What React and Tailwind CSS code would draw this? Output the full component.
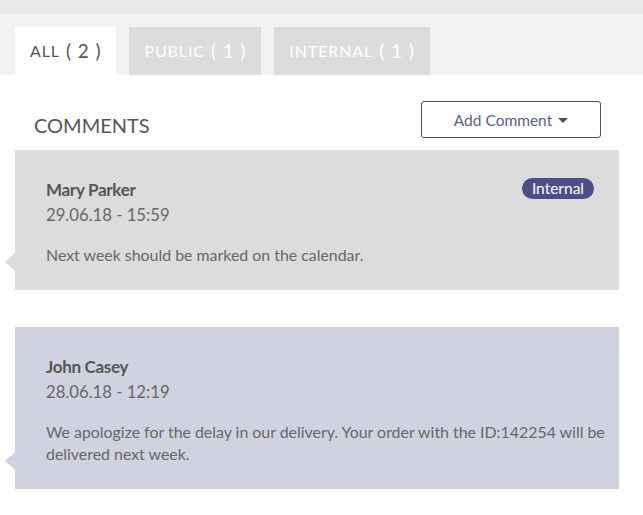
const COMMENTS = [
  {
    id: 1,
    name: "Mary Parker",
    date: "29.06.18 - 15:59",
    body: "Next week should be marked on the calendar.",
    internal: true,
    bg: "bg-[#dcdcdc]",
    notch: "border-r-[#dcdcdc]",
  },
  {
    id: 2,
    name: "John Casey",
    date: "28.06.18 - 12:19",
    body: "We apologize for the delay in our delivery. Your order with the ID:142254 will be delivered next week.",
    internal: false,
    bg: "bg-[#d0d2e0]",
    notch: "border-r-[#d0d2e0]",
  },
];

const TABS = [
  { key: "all", label: "ALL", count: 2, active: true },
  { key: "public", label: "PUBLIC", count: 1 },
  { key: "internal", label: "INTERNAL", count: 1 },
];

function Comment({ c }) {
  return (
    <div className={`relative ${c.bg} pl-[31px] pr-[12px] pt-[29px] pb-[24px]`}>
      <span
        className={`absolute left-[-10px] bottom-[19px] w-0 h-0 border-y-[9px] border-y-transparent border-r-[10px] ${c.notch}`}
      />
      <div className="flex items-start justify-between">
        <div>
          <div className="text-[17px] font-bold text-[#555] leading-[22px] tracking-[-0.3px]">{c.name}</div>
          <div className="text-[16.7px] text-[#666] leading-[26px] mt-[1px]">{c.date}</div>
        </div>
        {c.internal && (
          <span className="bg-[#4a4f8a] text-white text-[15.5px] leading-[21px] px-[10px] mr-[13px] rounded-full -mt-[1px]">
            Internal
          </span>
        )}
      </div>
      <p className="mt-[16px] text-[15.9px] text-[#666] leading-[22px]">{c.body}</p>
    </div>
  );
}

export default function App() {
  return (
    <div className="w-[643px] h-[515px] bg-white overflow-hidden font-['Lato',sans-serif]">
      <div className="h-[14px] bg-[#e8e8ea]" />
      <div className="bg-[#f2f2f2] pt-[13px] pl-[15px] flex gap-[13px]">
        {TABS.map((t) => (
          <div
            key={t.key}
            className={`h-[48px] flex items-center px-[15px] text-[16px] tracking-[0.9px] ${
              t.active ? "bg-white text-[#555]" : "bg-[#dcdcdc] text-white"
            }`}
          >
            {t.label} <span className="ml-[6px] text-[19px]">( {t.count} )</span>
          </div>
        ))}
      </div>
      <div className="pl-[15px] pr-[24px] pb-[25px]">
        <div className="flex items-center justify-between pl-[19px] pr-[18px] pt-[26px] pb-[12px]">
          <h2 className="text-[20px] text-[#555] leading-none mt-[10px]">COMMENTS</h2>
          <button className="w-[180px] h-[37px] border border-[#4a4e6e] rounded-[3px] text-[15.5px] text-[#5a5f7f] flex items-center justify-center gap-[6px] pt-[3px]">
            Add Comment
            <svg width="10" height="6" viewBox="0 0 10 6">
              <path d="M0 0h10L5 5z" fill="#4a4e6e" />
            </svg>
          </button>
        </div>
        <div className="flex flex-col gap-[37px]">
          {COMMENTS.map((c) => (
            <Comment key={c.id} c={c} />
          ))}
        </div>
      </div>
    </div>
  );
}
